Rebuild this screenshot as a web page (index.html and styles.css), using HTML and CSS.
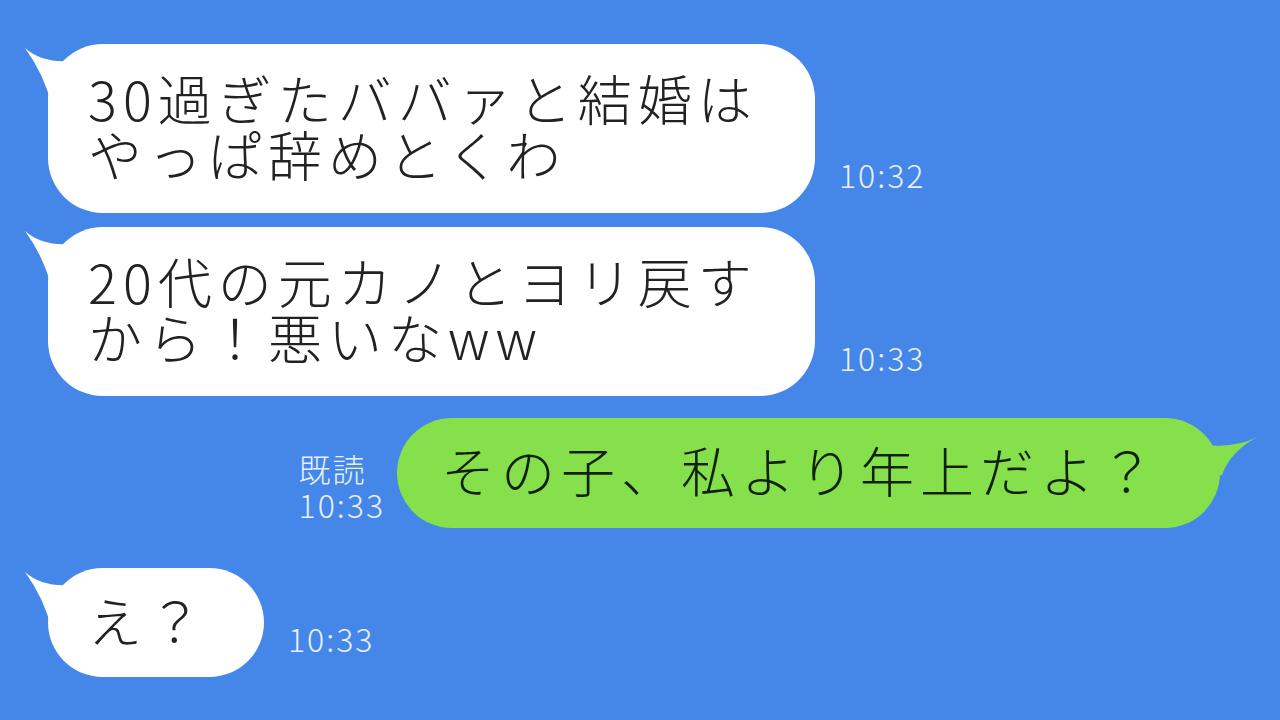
FILE: index.html
```html
<!DOCTYPE html>
<html lang="ja">
  <head>
    <meta charset="UTF-8" />
    <meta name="viewport" content="width=device-width, initial-scale=1.0" />
    <title>トーク</title>
    <link rel="stylesheet" href="styles.css">
  </head>
  <body>
    <div class="chat">
      <div class="row row_first">
        <div class="bubble bubble_left bubble_wide">
          <svg class="tail tail_left" viewBox="0 0 70 70" width="70" height="70">
            <path d="M3 4 Q20 19 48 17 L66 60 L30 62 Q22 30 3 4 Z" />
          </svg>
          <p class="text">30過ぎたババァと結婚は<br>やっぱ辞めとくわ</p>
        </div>
        <div class="time">10:32</div>
      </div>

      <div class="row row_second">
        <div class="bubble bubble_left bubble_wide">
          <svg class="tail tail_left" viewBox="0 0 70 70" width="70" height="70">
            <path d="M3 4 Q20 19 48 17 L66 60 L30 62 Q22 30 3 4 Z" />
          </svg>
          <p class="text">20代の元カノとヨリ戻す<br>から！悪いなww</p>
        </div>
        <div class="time">10:33</div>
      </div>

      <div class="row row_mine">
        <div class="read">
          <div>既読</div>
          <div>10:33</div>
        </div>
        <div class="bubble bubble_right">
          <svg class="tail tail_right" viewBox="0 0 70 70" width="70" height="70">
            <path d="M17 27 Q46 30 67 19 Q40 34 32 57 L8 60 Z" />
          </svg>
          <p class="text">その子、私より年上だよ？</p>
        </div>
      </div>

      <div class="row row_last">
        <div class="bubble bubble_left bubble_short">
          <svg class="tail tail_left" viewBox="0 0 70 70" width="70" height="70">
            <path d="M3 4 Q20 19 48 17 L66 60 L30 62 Q22 30 3 4 Z" />
          </svg>
          <p class="text">え？</p>
        </div>
        <div class="time">10:33</div>
      </div>
    </div>
  </body>
</html>
```

FILE: styles.css
```css
body {
  margin: 0;
  background-color: #4487e9;
  font-family: "Noto Sans CJK JP", "Noto Sans", sans-serif;
  font-weight: 300;
}
.chat {
  display: flex;
  flex-direction: column;
  padding: 44px 0 0 48px;
  width: 1280px;
  height: 720px;
  box-sizing: border-box;
}
.row {
  display: flex;
  align-items: flex-end;
}
.row_second {
  margin-top: 14px;
}
.row_mine {
  margin-top: 22px;
  justify-content: flex-end;
  padding-right: 60px;
}
.row_last {
  margin-top: 40px;
}
.bubble {
  position: relative;
  border-radius: 55px;
  background-color: #fff;
  padding: 26px 40px 31px 40px;
}
.bubble_wide {
  width: 767px;
  box-sizing: border-box;
}
.bubble_short {
  padding: 24px 56px 29px 40px;
}
.bubble_right {
  background-color: #85e04b;
  padding: 24px 60px 30px 44px;
}
.text {
  margin: 0;
  font-size: 54px;
  line-height: 56px;
  letter-spacing: 6px;
  color: #222;
  white-space: nowrap;
}
.bubble_right .text {
  color: #10200a;
}
.tail {
  position: absolute;
  top: 0;
}
.tail_left {
  left: -26px;
  fill: #fff;
}
.tail_right {
  right: -40px;
  fill: #85e04b;
}
.time {
  margin: 0 0 22px 24px;
  font-size: 32px;
  line-height: 34px;
  letter-spacing: 2px;
  color: #e8effb;
}
.read {
  margin: 0 12px 6px 0;
  font-size: 32px;
  line-height: 36px;
  letter-spacing: 2px;
  color: #e8effb;
}
```
